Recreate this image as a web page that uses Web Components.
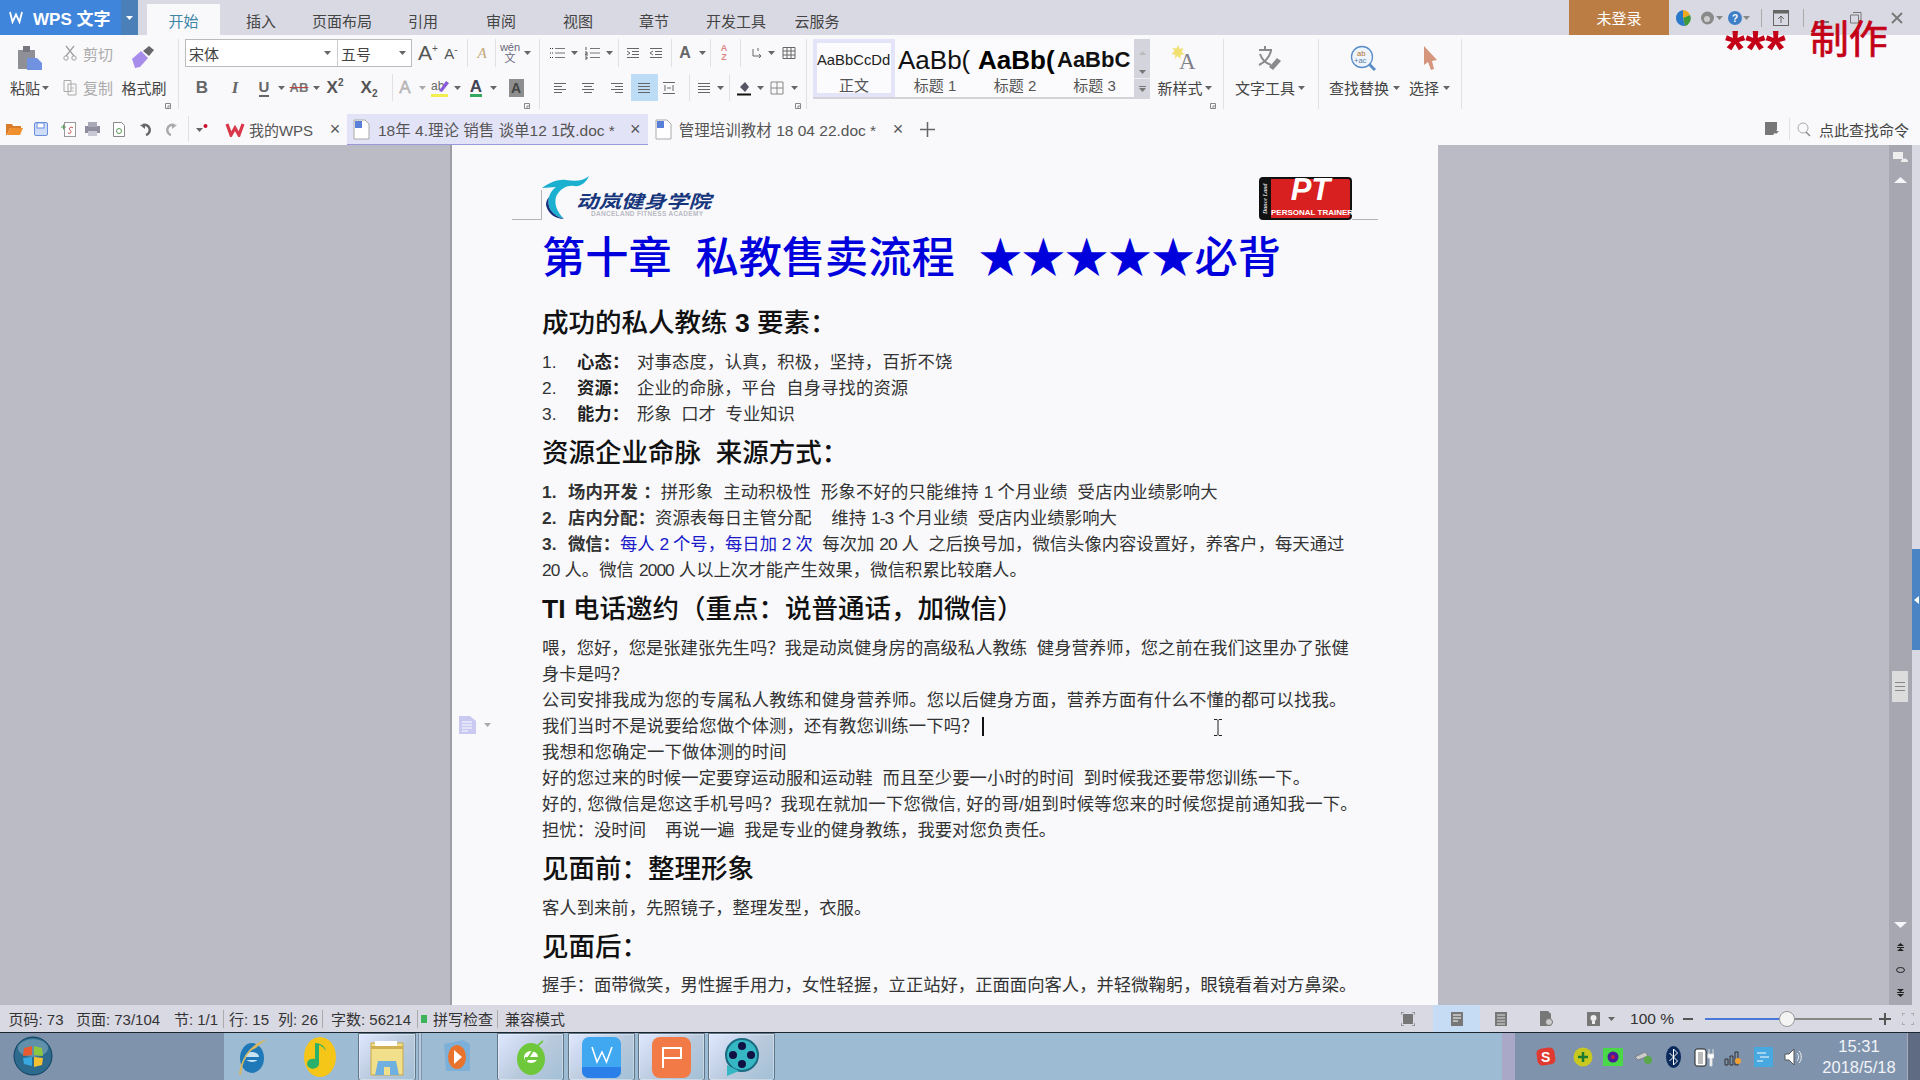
<!DOCTYPE html>
<html lang="zh"><head><meta charset="utf-8"><title>WPS 文字</title>
<style>
html,body{margin:0;padding:0;width:1920px;height:1080px;overflow:hidden;font-family:"Liberation Sans","Noto Sans CJK SC",sans-serif}
</style></head><body>
<wps-app>
<wps-titlebar></wps-titlebar>
<wps-ribbon></wps-ribbon>
<wps-tabs></wps-tabs>
<wps-work></wps-work>
<wps-status></wps-status>
<wps-taskbar></wps-taskbar>
</wps-app>
<script>
const FONT = '"Liberation Sans","Noto Sans CJK SC",sans-serif';

function def(name, html, css) {
  customElements.define(name, class extends HTMLElement {
    constructor() {
      super();
      this.attachShadow({mode: "open"}).innerHTML = `<style>*{box-sizing:border-box}
        .c{display:flex;align-items:center;justify-content:center;flex:none;white-space:nowrap;height:100%}
        .v{display:block;width:1px;height:100%;background:#e0e0e6}
        ${css}</style>${html}`;
    }
  });
}
// lays out cells in a row by centre x, the gaps come out as margins
function cells(x0, items) {
  let x = x0, out = "";
  for (const [cx, w, html, style] of items) {
    const left = cx - w / 2;
    out += `<span class="c" style="width:${w}px;margin-left:${left - x}px;${style || ""}">${html}</span>`;
    x = left + w;
  }
  return out;
}
const caret = (c = "#666") => `<svg width="7" height="4" viewBox="0 0 7 4"><path d="M0 0h7L3.500 4z" fill="${c}"/></svg>`;
const sep = `<i class="v"></i>`;

def("wps-app", `<slot></slot>`, `:host{display:flex;flex-direction:column;width:1920px;height:1080px;font-family:${FONT}}`);

def("wps-titlebar", `
  <div class="bar">
  ${cells(0, [
    [69, 138, `<svg width="14" height="13" viewBox="0 0 14 13" style="margin-right:10px"><path d="M1 1l2.500 10L7 3.500 10.500 11 13 1" fill="none" stroke="#fff" stroke-width="1.800"/></svg><b>WPS 文字</b>`, "background:#3f85dc;color:#fff;font-size:17px;justify-content:flex-start;padding-left:9px"],
  ])}
  <span class="c" style="width:17px;margin-left:-17px;background:#4a7fb8">${caret("#fff")}</span>
  <span class="c tab on" style="width:73px;margin-left:9px">开始</span>
  ${cells(221, [
    [262, 60, "插入"], [343, 70, "页面布局"], [424, 40, "引用"], [502, 40, "审阅"], [579, 40, "视图"],
    [655, 40, "章节"], [737, 70, "开发工具"], [818, 50, "云服务"],
  ].map(i => [i[0], i[1], i[2], "padding-top:5px"]))}
  ${cells(843, [
    [1620, 100, "未登录", "background:#bb7d43;color:#fff"],
    [1684, 18, `<svg width="16" height="18" viewBox="0 0 16 18"><path d="M8 1a8 8 0 0 1 7 5L8 9z" fill="#f2a81e"/><path d="M15 6a8 8 0 0 1-5 11L8 9z" fill="#3f9a3a"/><path d="M10 17A8 8 0 0 1 8 1v8z" fill="#2a78c8"/></svg>`],
    [1708, 14, `<svg width="13" height="14" viewBox="0 0 13 14"><circle cx="6.500" cy="7" r="6.500" fill="#8a8a8a"/><circle cx="6" cy="8" r="3" fill="#ccc"/></svg>`],
    [1720, 8, caret("#888")],
    [1736, 15, `<svg width="14" height="14" viewBox="0 0 14 14"><circle cx="7" cy="7" r="7" fill="#3f7fc8"/><text x="4" y="11" font-family="Liberation Sans" font-weight="700" font-size="10" fill="#fff">?</text></svg>`],
    [1747, 8, caret("#888")],
    [1762, 1, `<i class="v" style="background:#aaa;height:18px"></i>`],
    [1782, 18, `<svg width="16" height="16" viewBox="0 0 16 16"><rect x=".5" y=".5" width="15" height="15" fill="none" stroke="#666"/><rect x=".5" y=".5" width="15" height="3" fill="#666"/><path d="M8 13V6.500M5 9l3-3 3 3" fill="none" stroke="#666"/></svg>`],
    [1804, 1, `<i class="v" style="background:#aaa;height:18px"></i>`],
    [1824, 12, `<svg width="12" height="12" viewBox="0 0 12 12"><path d="M0 10h12" stroke="#777" stroke-width="2"/></svg>`],
    [1857, 12, `<svg width="12" height="12" viewBox="0 0 12 12"><path d="M3 .5h8v8M.5 3h8v8h-8z" fill="none" stroke="#777"/></svg>`],
    [1898, 12, `<svg width="12" height="12" viewBox="0 0 12 12"><path d="M1 1l10 10M11 1L1 11" stroke="#777" stroke-width="1.800"/></svg>`],
  ])}
  </div>
  <div class="stamp"><span class="ast">***</span><span class="zz">制作</span></div>`, `
  :host{display:block;height:35px;background:#d9d9e3;position:relative;flex:none;font-size:15px;color:#444}
  .bar{display:flex;height:35px}
  .tab.on{height:31px;margin-top:4px;padding-top:1px;background:#f9f9fb;color:#3d86a8}
  .stamp{position:absolute;left:1725px;top:20px;display:flex;align-items:flex-start;color:#c40018;z-index:5;height:40px}
  .ast{font:700 52px/52px "Liberation Sans",sans-serif;margin-top:3px;height:40px}
  .zz{font:400 39px/39px ${FONT};margin-left:24px;-webkit-text-stroke:.7px #c40018}
`);

const icon = (w, h, body, st = "") => `<svg width="${w}" height="${h}" viewBox="0 0 ${w} ${h}" style="${st}">${body}</svg>`;
const ln = (d, c = "#666") => icon(14, 14, `<path d="${d}" stroke="${c}" fill="none"/>`);
const L = "M1 2.500h12M1 5.500h8M1 8.500h12M1 11.500h8", C = "M1 2.500h12M3 5.500h8M1 8.500h12M3 11.500h8", R = "M1 2.500h12M5 5.500h8M1 8.500h12M5 11.500h8", J = "M1 2.500h12M1 5.500h12M1 8.500h12M1 11.500h12";
const bullets = icon(15, 14, `<path d="M5 2.500h10M5 7h10M5 11.500h10" stroke="#777"/><path d="M0 2.500h3M0 7h3M0 11.500h3" stroke="#333" stroke-dasharray="1 1"/>`);
const numbers = icon(15, 14, `<path d="M5 2.500h10M5 7h10M5 11.500h10" stroke="#777"/><path d="M1 1v3M0 6h2v2H0v1h3M0 11h2v2H0" stroke="#333" fill="none" stroke-width=".8"/>`);
const launch = (st) => `<svg class="launch" style="${st}" width="6" height="6" viewBox="0 0 6 6"><path d="M.5.500h5v5h-5zM3 3h2.500v2.500H3z" fill="none" stroke="#888"/></svg>`;
const sepc = (x) => [x, 1, sep, ""];

def("wps-ribbon", `
  <section style="width:179px">
    <div class="r1">${cells(0, [
      [30, 25, icon(25, 24, `<rect x="0" y="4" width="17" height="19" fill="#8f8f96"/><rect x="5" y="0" width="7" height="6" fill="#77777f"/><path d="M9 12h10l5 5v7H9z" fill="#7092e0"/>`, "margin-top:10px")],
      [70, 14, icon(14, 16, `<path d="M3 1l8 10M11 1L3 11" stroke="#a0a0a0" stroke-width="1.300" fill="none"/><circle cx="3" cy="13" r="2.200" fill="none" stroke="#a0a0a0"/><circle cx="11" cy="13" r="2.200" fill="none" stroke="#a0a0a0"/>`)],
      [98, 31, "剪切", "color:#aaa"],
      [143, 24, icon(24, 24, `<path d="M1 14l9-8 7 7-8 9-5 1z" fill="#a88cec"/><path d="M12 6l6-5 5 4-5 6z" fill="#66666c"/>`, "margin-top:8px")],
    ])}</div>
    <div class="r2">${cells(0, [
      [25, 31, "粘贴"], [45, 7, caret()],
      [70, 14, icon(14, 16, `<path d="M1 .5h7v11H1zM5 4h8v11H5z" fill="#f8f8f8" stroke="#aaa"/><path d="M7 8h4M7 11h4" stroke="#bbb"/>`)],
      [98, 31, "复制", "color:#aaa"],
      [144, 46, "格式刷"],
    ])}</div>${launch("left:165px")}
  </section>
  <section style="width:361px">
    <div class="r1">${cells(179, [
      [261, 152, `宋体${caret()}`, "background:#fff;border:1px solid #bbb;border-right:0;justify-content:space-between;padding:0 6px 0 3px"],
    ])}
    ${cells(337, [
      [374.500, 75, `五号${caret()}`, "background:#fff;border:1px solid #bbb;border-left-color:#ccc;justify-content:space-between;padding:0 5px 0 3px"],
    ])}
    ${cells(412, [
      [428, 24, `<span style="font-size:21px">A<sup>+</sup></span>`, "color:#555"],
      [451, 20, `<span style="font-size:15px">A<sup>-</sup></span>`, "color:#555"],
      sepc(467),
      [482, 18, `<span style="font:italic 15px 'Liberation Serif',serif;color:#c4a777">A</span>`],
      sepc(495),
      [510, 24, `<span class="wen">wén<br>文</span>`],
      [527, 8, caret()],
    ])}</div>
    <div class="r2">${cells(179, [
      [202, 16, "B", "font-size:17px;font-weight:700;color:#666"],
      [235, 12, "I", "font:italic 700 17px 'Liberation Serif',serif;color:#666"],
      [264, 16, `<span style="border-bottom:2px solid #666;line-height:16px;font-size:15px;font-weight:700;color:#666">U</span>`],
      [281, 8, caret()],
      [299, 20, `<s style="font-size:13px;font-weight:700;color:#777;text-decoration-color:#b44">AB</s>`],
      [316, 8, caret()],
      [335, 22, `<span style="font-size:17px;font-weight:700;color:#555">X<sup>2</sup></span>`],
      [369, 22, `<span style="font-size:17px;font-weight:700;color:#555">X<sub>2</sub></span>`],
      sepc(392),
      [405, 16, `<span style="font-size:17px;color:#c4c4c4;-webkit-text-stroke:.3px #888">A</span>`],
      [422, 8, caret("#aaa")],
      [440, 18, icon(18, 19, `<text x="0" y="12" font-family="Liberation Sans" font-size="12" fill="#666">ab</text><path d="M8 13l7-10 3 2-7 9z" fill="#8a5ad8"/><rect y="16" width="17" height="3" fill="#f2ee50"/>`)],
      [457, 8, caret()],
      [476, 16, `<span style="border-bottom:3px solid #35a860;line-height:15px;font-size:17px;font-weight:700;color:#445">A</span>`],
      [493, 8, caret()],
      [516, 16, `<span style="background:#8e8e8e;color:#444;font-size:14px;font-weight:700;width:15px;height:18px;display:flex;align-items:center;justify-content:center">A</span>`],
    ])}</div>${launch("left:345px")}
  </section>
  <section style="width:267px">
    <div class="r1">${cells(540, [
      [557, 16, bullets], [574, 8, caret()],
      [592, 16, numbers], [609, 8, caret()],
      sepc(618),
      [633, 16, ln("M1 2.500h12M6 5.500h7M6 8.500h7M1 11.500h12M1 5l3 2-3 2")],
      [656, 16, ln("M1 2.500h12M6 5.500h7M6 8.500h7M1 11.500h12M4 5L1 7l3 2")],
      sepc(671),
      [685, 14, `<b style="font-size:16px;color:#666">A</b>`], [702, 8, caret()],
      sepc(710),
      [724, 12, `<span style="font:700 9px/9px 'Liberation Sans',sans-serif;color:#d88;text-align:center">A<br>Z</span>`],
      sepc(740),
      [756, 14, ln("M4 3v7h8M10 8l2 2-2 2M9 2v3")], [771, 8, caret()],
      [789, 16, ln("M1 1.500h12v11H1zM5 1.500v11M9 1.500v11M1 5h12M1 9h12")],
    ])}</div>
    <div class="r2">${cells(540, [
      [560, 14, ln(L)], [588, 14, ln(C)], [617, 14, ln(R)],
      [644, 27, ln(J), "background:#bddcf5"],
      [669, 16, ln("M1 1.500h12M1 12.500h12M3 4v6M11 4v6M5 7h4")],
      sepc(689),
      [704, 14, ln(J)], [720, 8, caret()],
      sepc(729),
      [744, 16, icon(16, 16, `<path d="M4 7l5-5 4 5-4 5z" fill="#556"/><path d="M1 14.500h14" stroke="#111" stroke-width="2"/>`)], [760, 8, caret()],
      [777, 14, ln("M1 1h12v12H1zM7 1v12M1 7h12", "#888")], [794, 8, caret()],
    ])}</div>${launch("left:255px")}
  </section>
  <div class="styles">
    <div class="st sel"><p class="s0">AaBbCcDd</p><u>正文</u></div>
    <div class="st"><p class="s1">AaBb(</p><u>标题 1</u></div>
    <div class="st"><p class="s2">AaBb(</p><u>标题 2</u></div>
    <div class="st" style="width:79px"><p class="s3">AaBbC</p><u>标题 3</u></div>
    <div class="spin">
      <i style="height:27px">${icon(7, 4, `<path d="M0 4h7L3.500 0z" fill="#bbb"/>`)}</i>
      <i style="height:12px">${caret("#777")}</i>
      <i style="height:21px;border-top:1px solid #eee">${icon(7, 6, `<path d="M0 0h7v1H0zM0 2h7L3.500 6z" fill="#777"/>`)}</i>
    </div>
  </div>
  <section style="width:74px">
    <div class="r1">${cells(1150, [
      [1185, 30, icon(30, 26, `<path d="M8 0l1.500 4 4-1-2 4 3 2-4 1v4l-3-3-3 3 1-4-4-1 3-3-2-3 4 .500z" fill="#f0e070"/><text x="9" y="24" font-family="Liberation Serif" font-size="23" fill="#808088">A</text>`, "margin-top:10px")],
    ])}</div>
    <div class="r2">${cells(1150, [[1180, 46, "新样式"], [1208, 8, caret()]])}</div>${launch("left:60px")}
  </section>
  <section style="width:95px">
    <div class="r1">${cells(1225, [
      [1270, 26, icon(26, 26, `<path d="M3 5h13M9 1v4M4 9c2 6 5 9 11 11M15 6c-2 7-6 11-12 14" stroke="#8a8a8a" stroke-width="2" fill="none"/><path d="M13 22l8-9 4 3-8 9z" fill="#8a8a8a"/>`, "margin-top:10px")],
    ])}</div>
    <div class="r2">${cells(1225, [[1266, 60, "文字工具"], [1302, 8, caret()]])}</div>
  </section>
  <section style="width:143px">
    <div class="r1">${cells(1320, [
      [1364, 26, icon(26, 26, `<circle cx="12" cy="12" r="10.500" fill="#eef4fa" stroke="#5a8dc8" stroke-width="1.300"/><text x="7" y="11" font-family="Liberation Sans" font-size="7.500" fill="#b07030">ab</text><text x="4" y="18" font-family="Liberation Sans" font-size="7.500" fill="#5a7ea8">+ac</text><path d="M19 19l6 6" stroke="#5a8dc8" stroke-width="3"/>`, "margin-top:10px")],
      [1432, 16, icon(16, 26, `<path d="M1 1l13 14-5 1 2 8-3 1-3-8-4 3z" fill="#d6967e"/>`, "margin-top:10px")],
    ])}</div>
    <div class="r2">${cells(1320, [[1360, 60, "查找替换"], [1397, 8, caret()], [1425, 30, "选择"], [1447, 8, caret()]])}</div>
  </section>`, `
  :host{display:flex;height:78px;background:#f9f9fb;flex:none;color:#444;font-size:15px;align-items:flex-start}
  section{position:relative;height:70px;margin-top:4px;border-right:1px solid #e0e0e6;flex:none;padding-top:0}
  .r1,.r2{display:flex;height:28px}
  .r2{height:27px;margin-top:7px}
  .launch{position:absolute;top:64px}
  sup,sub{font-size:10px;line-height:0}
  .wen{font-size:11px;line-height:11px;text-align:center;color:#667}
  .styles{position:relative;flex:none;display:flex;width:337px;height:60px;margin:4px 0 0 6px;background:#fbfbfd;border-bottom:2px solid #d4d4d8}
  .st{width:80px;height:58px;text-align:center;flex:none;white-space:nowrap}
  .st p{margin:4px 0 0;height:34px;line-height:34px;text-align:left}
  .s0{font:14.800px/34px ${FONT};color:#222}
  .s1{font:26px/34px ${FONT};color:#111;padding-left:3px}
  .s2{font:700 26px/34px ${FONT};color:#000;padding-left:3px}
  .s3{font:700 22px/34px ${FONT};color:#111;padding-left:2px}
  .st u{display:block;text-decoration:none;font-size:15px;color:#555;line-height:18px;margin-top:0}
  .sel{border:4px solid #e4e4f8;width:82px}
  .sel p{margin-top:0}
  .spin{width:16px;background:#d4d4dc;display:flex;flex-direction:column;height:60px;margin-bottom:-2px}
  .spin i{display:flex;align-items:center;justify-content:center}
`);

def("wps-tabs", `
  ${cells(0, [
    [14, 17, icon(17, 14, `<path d="M0 2h6l1 2h8v2H4L1 13H0z" fill="#d97c28"/><path d="M4 6h13l-3 7H1z" fill="#f09030"/>`)],
    [41, 14, icon(14, 14, `<rect x=".5" y=".5" width="13" height="13" rx="1.500" fill="#cfdcf8" stroke="#6a8fe0"/><rect x="3" y="1" width="7" height="5" fill="#fff" stroke="#6a8fe0"/>`)],
    [68, 15, icon(15, 15, `<rect x="3.500" y=".5" width="11" height="14" fill="#fff" stroke="#999"/><path d="M0 5h5M2.500 2.500v5" stroke="#5a9a5a"/><path d="M7 11c3 1 4-1 2-3s1-4 3-2" fill="none" stroke="#c05050"/>`)],
    [92, 15, icon(15, 14, `<rect y="4" width="15" height="7" fill="#8e8ea0"/><rect x="3" y="0" width="9" height="5" fill="#a8a8b8"/><rect x="3" y="9" width="9" height="5" fill="#c8c8d4"/>`)],
    [119, 12, icon(12, 15, `<path d="M.5.500h8l3 3v11H.5z" fill="#fff" stroke="#888"/><circle cx="6" cy="9" r="2.500" fill="none" stroke="#5a9a5a"/>`)],
    [145, 13, icon(13, 13, `<path d="M4 2a5 5 0 1 1 3 10" fill="none" stroke="#666" stroke-width="2.500"/><path d="M1 2l5-1v5z" fill="#666"/>`)],
    [171, 13, icon(13, 13, `<path d="M9 2a5 5 0 1 0-3 10" fill="none" stroke="#aaa" stroke-width="2.500"/><path d="M12 2L7 1v5z" fill="#aaa"/>`)],
    [188, 1, `<i class="v" style="height:26px"></i>`],
    [202, 12, icon(12, 10, `<path d="M0 4h7L3.500 8z" fill="#666"/><circle cx="9.500" cy="2" r="2" fill="#c8102e"/>`)],
    [235, 20, icon(20, 15, `<path d="M2 2l4 11 4-7 4 7 4-11" fill="none" stroke="#d8384a" stroke-width="3.200"/>`)],
    [281, 63, "我的WPS"],
    [335, 10, "×", "font-size:18px;color:#555"],
  ])}
  <div class="act">
    ${icon(17, 21, `<path d="M1 1h11l4 4v15H1z" fill="#fff" stroke="#aaa"/><rect x="2" y="2" width="7" height="7" fill="#5a7fd8"/>`)}
    <span style="margin-left:8px;width:252px">18年 4.理论 销售 谈单12 1改.doc *</span>
    <span style="font-size:18px">×</span>
  </div>
  ${cells(648, [
    [663, 17, icon(17, 21, `<path d="M1 1h11l4 4v15H1z" fill="#fff" stroke="#aaa"/><rect x="2" y="2" width="7" height="7" fill="#5a7fd8"/>`)],
    [777.500, 201, "管理培训教材 18 04 22.doc *", "font-size:15.500px"],
    [898, 10, "×", "font-size:18px;color:#555"],
    [927, 16, icon(15, 15, `<path d="M7.500 0v15M0 7.500h15" stroke="#666" stroke-width="1.500"/>`)],
    [1772, 14, icon(14, 14, `<path d="M0 0h12v8l-4 5H0z" fill="#777"/><path d="M8 9h6l-3 3z" fill="#777"/>`)],
    [1789, 1, `<i class="v" style="height:22px"></i>`],
    [1804, 14, icon(14, 15, `<circle cx="6" cy="6" r="5" fill="none" stroke="#aaa"/><path d="M9 10l4 4" stroke="#888" stroke-width="1.500"/>`)],
    [1864, 92, "点此查找命令", "color:#444"],
  ])}`, `
  :host{display:flex;height:32px;background:#f9f9fb;flex:none;font-size:15px;color:#555}
  .act{display:flex;align-items:center;flex:none;width:301px;margin-left:7px;padding-left:6px;height:31px;margin-top:1px;background:#e3e3f7;border-bottom:1px solid #9a9ad8;white-space:nowrap;font-size:15.500px}
`);

def("wps-doc", `<slot></slot>`, `
  :host{display:block;width:988px;height:860px;background:#f9f9fb;border-left:2px solid #9e9ea6;overflow:hidden;padding-left:90px;flex:none;position:relative;color:#222;font-family:${FONT}}
`);

def("doc-header", `
  <i class="stub" style="width:30px;height:30px;border-right:1px solid #b4b4b8"></i>
  <div class="logo">
    ${icon(52, 44, `<path d="M0 12 C6 8 14 3 24 4 C32 5 40 6 47 0 C44 7 38 11 32 10 C24 9 17 14 14 21 C12 28 15 36 22 43 C10 40 4 30 7 21 C8 17 10 14 14 11 C10 11 5 12 0 12z" fill="#1bb0d0"/><path d="M7 21 C4 30 10 40 22 43 C14 43 6 38 4 29 C4 26 5 23 7 21z" fill="#16307e"/>`)}
    <div class="lt"><b>动岚健身学院</b><small>DANCELAND FITNESS ACADEMY</small></div>
  </div>
  <div class="pt"><i>Dance Land</i><div><b>PT</b><small>PERSONAL TRAINER</small></div></div>
  <i class="stub" style="width:26px"></i>`, `
  :host{display:flex;align-items:flex-end;height:75px;margin-left:-30px;width:866px}
  .stub{display:block;height:1px;border-bottom:1px solid #b4b4b8;flex:none}
  .logo{display:flex;align-items:flex-end;height:44px;flex:1}
  .logo svg{flex:none;margin-right:-18px}
  .lt{display:flex;flex-direction:column;align-items:flex-start}
  .lt b{font:italic 700 22.500px/18px ${FONT};color:#17367c;white-space:nowrap;height:19px;transform:scaleY(.8);transform-origin:bottom}
  .lt small{font:700 6.500px/8px "Liberation Sans",sans-serif;color:#b9bac4;margin:0 0 2px 15px;white-space:nowrap;letter-spacing:.3px}
  .pt{width:93px;height:43px;background:#d82020;border-radius:4px;border:2px solid #111;border-left:12px solid #111;position:relative;display:flex;color:#fff;flex:none}
  .pt i{position:absolute;left:-11px;top:0;bottom:0;width:10px;writing-mode:vertical-rl;transform:rotate(180deg);font:italic 700 6px/10px "Liberation Serif",serif;text-align:center;color:#ddd;white-space:nowrap}
  .pt div{display:flex;flex-direction:column;align-items:center;width:100%;position:relative}
  .pt b{display:block;font:italic 900 31px/35px "Liberation Sans",sans-serif;color:#fff;margin-top:-7px}
  .pt small{position:absolute;left:0;right:0;bottom:0;text-align:center;font:700 8px/10px "Liberation Sans",sans-serif;white-space:nowrap}
`);

def("doc-title", `<slot></slot>`, `:host{display:block;font:500 43.200px/52px ${FONT};color:#0000dc;white-space:pre;margin-top:12px;height:53px}`);
def("doc-h", `<slot></slot>`, `:host{display:block;font:500 26.500px/32px ${FONT};color:#111;white-space:pre;height:32px}`);
def("doc-p", `<slot></slot>`, `:host{display:block;font:400 17.330px/26px ${FONT};color:#333;white-space:pre;height:26px}`);
def("doc-li", `<slot name="n"></slot><slot name="k"></slot><slot></slot>`, `
  :host{display:block;font:400 17.330px/26px ${FONT};color:#333;white-space:pre;height:26px}
  ::slotted([slot=n]){display:inline-block;width:35px}
  ::slotted([slot=k]){display:inline-block;width:60px;font-weight:700;color:#222}
`);

def("wps-work", `
  <div class="gutter"></div>
  <wps-doc>
    <div class="mark">${icon(17, 18, `<path d="M0 0h11l6 5v13H0z" fill="#c9c9f2"/><path d="M3 6h10M3 9h10M3 12h10M3 15h6" stroke="#fff"/>`)}${caret("#aaa")}</div>
    <doc-header></doc-header>
    <doc-title>第十章  私教售卖流程  ★★★★★必背</doc-title>
    <doc-h style="margin-top:22px">成功的私人教练 <b>3</b> 要素：</doc-h>
    <div style="height:10px"></div>
    <doc-li style="letter-spacing:.2px"><span slot="n">1.</span><span slot="k">心态：</span>对事态度，认真，积极，坚持，百折不饶</doc-li>
    <doc-li style="letter-spacing:.1px"><span slot="n">2.</span><span slot="k">资源：</span>企业的命脉，平台  自身寻找的资源</doc-li>
    <doc-li><span slot="n">3.</span><span slot="k">能力：</span>形象  口才  专业知识</doc-li>
    <doc-h style="margin-top:10px">资源企业命脉  来源方式：</doc-h>
    <div style="height:10px"></div>
    <doc-p style="letter-spacing:.2px"><b class="n">1.</b><b>场内开发 ：</b>拼形象  主动积极性  形象不好的只能维持 <i class="d">1</i> 个月业绩  受店内业绩影响大</doc-p>
    <doc-p style="letter-spacing:.08px"><b class="n">2.</b><b>店内分配：</b>资源表每日主管分配    维持 <i class="d">1-3</i> 个月业绩  受店内业绩影响大</doc-p>
    <doc-p><b class="n">3.</b><b>微信：</b><span style="color:#1a1ac8">每人 <i class="d">2</i> 个号，每日加 <i class="d">2</i> 次</span>  每次加 <i class="d">20</i> 人  之后换号加，微信头像内容设置好，养客户，每天通过</doc-p>
    <doc-p style="letter-spacing:.08px"><i class="d">20</i> 人。微信 <i class="d">2000</i> 人以上次才能产生效果，微信积累比较磨人。</doc-p>
    <doc-h style="margin-top:10px"><b style="font-weight:700">TI</b> 电话邀约（重点：说普通话，加微信）</doc-h>
    <div style="height:10px"></div>
    <doc-p>喂，您好，您是张建张先生吗？我是动岚健身房的高级私人教练  健身营养师，您之前在我们这里办了张健</doc-p>
    <doc-p>身卡是吗？</doc-p>
    <doc-p style="letter-spacing:.16px">公司安排我成为您的专属私人教练和健身营养师。您以后健身方面，营养方面有什么不懂的都可以找我。</doc-p>
    <doc-p style="letter-spacing:.14px">我们当时不是说要给您做个体测，还有教您训练一下吗？<i class="cur"></i></doc-p>
    <doc-p style="letter-spacing:.16px">我想和您确定一下做体测的时间</doc-p>
    <doc-p style="letter-spacing:.08px">好的您过来的时候一定要穿运动服和运动鞋  而且至少要一小时的时间  到时候我还要带您训练一下。</doc-p>
    <doc-p style="letter-spacing:.24px">好的, 您微信是您这手机号吗？我现在就加一下您微信, 好的哥/姐到时候等您来的时候您提前通知我一下。</doc-p>
    <doc-p>担忧：没时间    再说一遍  我是专业的健身教练，我要对您负责任。</doc-p>
    <doc-h style="margin-top:10px">见面前：整理形象</doc-h>
    <div style="height:10px"></div>
    <doc-p>客人到来前，先照镜子，整理发型，衣服。</doc-p>
    <doc-h style="margin-top:10px">见面后：</doc-h>
    <div style="height:9px"></div>
    <doc-p>握手：面带微笑，男性握手用力，女性轻握，立正站好，正面面向客人，并轻微鞠躬，眼镜看着对方鼻梁。</doc-p>
    ${icon(8, 17, `<path d="M0 .5h3l1 1 1-1h3M4 1.500v14M0 16.500h3l1-1 1 1h3" fill="none" stroke="#222"/>`, "position:absolute;left:762px;top:574px")}
  </wps-doc>
  <div class="rest"></div>
  <div class="sb">
    <div class="a" style="top:7px;left:4px">${icon(15, 10, `<path d="M0 0h10v7H0z" fill="#eee"/><path d="M8 10a3.500 3.500 0 0 1 7 0z" fill="#eee"/>`)}</div>
    <div class="a" style="top:32px;left:5px">${icon(13, 6, `<path d="M0 6h13L6.500 0z" fill="#f6f6fa"/>`)}</div>
    <div class="thumb"><i></i><i></i><i></i></div>
    <div class="a" style="top:777px;left:5px">${icon(13, 6, `<path d="M0 0h13L6.500 6z" fill="#f6f6fa"/>`)}</div>
    <div class="a" style="top:798px;left:8px">${icon(7, 8, `<path d="M0 3l3.500-3L7 3zM0 4h7v1H0zM0 8l3.500-3L7 8z" fill="#222"/>`)}</div>
    <div class="a" style="top:822px;left:7px">${icon(9, 6, `<ellipse cx="4.500" cy="3" rx="4" ry="2.500" fill="none" stroke="#222"/>`)}</div>
    <div class="a" style="top:844px;left:8px">${icon(7, 8, `<path d="M0 0l3.500 3L7 0zM0 3h7v1H0zM0 5l3.500 3L7 5z" fill="#222"/>`)}</div>
  </div>
  <div class="side"><div class="tabb">${icon(5, 8, `<path d="M5 0v8L0 4z" fill="#fff"/>`)}</div></div>`, `
  :host{display:flex;flex:none;height:860px;background:#bbbbc5;position:relative;overflow:hidden}
  .gutter{width:450px;flex:none}
  .mark{position:absolute;left:7px;top:571px;display:flex;align-items:center;gap:8px}
  .n{display:inline-block;width:26px}
  .d{font-style:normal;letter-spacing:-.9px}
  .cur{display:inline-block;width:2px;height:19px;background:#111;vertical-align:-4px;margin-left:3px}
  .rest{width:451px;flex:none}
  .sb{width:23px;background:#a7a7b1;flex:none;position:relative}
  .a{position:absolute;display:flex}
  .thumb{position:absolute;left:3px;top:526px;width:16px;height:31px;background:#dcdcdc;display:flex;flex-direction:column;gap:3px;justify-content:center;align-items:center}
  .thumb i{display:block;width:10px;height:1px;background:#888}
  .side{width:8px;flex:none;background:#d9d9e3;position:relative}
  .tabb{position:absolute;left:0;top:404px;width:8px;height:101px;background:#4a84c4;display:flex;align-items:center;justify-content:center}
`);

def("wps-status", `
  ${cells(0, [
    [36, 60, "页码: 73"], [118, 90, "页面: 73/104"], [196, 48, "节: 1/1"], [223, 1, `<i class="v" style="background:#aaa;height:18px"></i>`],
    [249, 42, "行: 15"], [298, 42, "列: 26"], [322, 1, `<i class="v" style="background:#aaa;height:18px"></i>`],
    [371, 82, "字数: 56214"], [417, 1, `<i class="v" style="background:#aaa;height:18px"></i>`],
    [424, 6, `<i style="display:block;width:6px;height:8px;background:#3cb55a"></i>`],
    [463, 60, "拼写检查"], [497, 1, `<i class="v" style="background:#aaa;height:18px"></i>`],
    [535, 60, "兼容模式"],
    [1408, 14, icon(14, 14, `<path d="M0 3V0h3M11 0h3v3M14 11v3h-3M3 14H0v-3" fill="none" stroke="#666"/><rect x="2" y="2" width="10" height="10" fill="#777"/>`)],
    [1456.500, 47, icon(12, 14, `<rect width="12" height="14" fill="#777"/><path d="M2 3h8M2 6h8M2 9h5" stroke="#fff"/>`), "background:#c6dcf4"],
    [1501, 12, icon(12, 14, `<rect width="12" height="14" fill="#777"/><path d="M2 3h8M2 6h8M2 9h8M2 12h8" stroke="#ddd"/>`)],
    [1547, 14, icon(14, 15, `<path d="M0 0h8l3 3v12H0z" fill="#777"/><circle cx="9" cy="11" r="3.500" fill="#ccc" stroke="#777"/>`)],
    [1593, 13, icon(13, 14, `<rect width="13" height="14" fill="#777"/><circle cx="6.500" cy="6" r="3" fill="#eee"/><rect x="5" y="9" width="3" height="3" fill="#eee"/>`)],
    [1611, 7, caret()],
    [1652, 46, "100 %", "font-size:15.500px"],
    [1688, 10, icon(10, 2, `<rect width="10" height="2" fill="#555"/>`)],
    [1788.500, 167, `<span class="track"><span class="done"></span><span class="knob"></span></span>`],
    [1885, 12, icon(12, 12, `<path d="M6 0v12M0 6h12" stroke="#555" stroke-width="2"/>`)],
    [1908, 12, icon(12, 12, `<path d="M0 3V0h3M9 0h3v3M12 9v3H9M3 12H0V9" fill="none" stroke="#888"/>`)],
  ])}`, `
  :host{display:flex;height:27px;background:#d9d9e3;flex:none;font-size:15px;color:#333;align-items:stretch}
  .track{display:block;position:relative;width:167px;height:2px;background:#888}
  .done{display:block;width:82px;height:2px;background:#4a78d8}
  .knob{position:absolute;left:74px;top:-7px;width:16px;height:16px;border-radius:50%;background:#f4f4f4;border:1px solid #999}
`);

const tile = (inner) => `<div class="tile">${inner}</div>`;
def("wps-taskbar", `
  <div class="start">${icon(40, 40, `<ellipse cx="20" cy="20" rx="19" ry="19" fill="#2c6b8e" stroke="#0d3d5c"/><ellipse cx="20" cy="12" rx="15" ry="9" fill="#fff" opacity=".25"/><path d="M11 12l8-2v9l-9 1z" fill="#e85a30"/><path d="M21 10l8 2 1 8-9-1z" fill="#8cc63e"/><path d="M10 22l9-1v9l-8-2z" fill="#39a8e0"/><path d="M21 21l9 1-1 7-8 2z" fill="#f5c030"/>`)}</div>
  <div class="tasks">${cells(224, [
    [252, 42, icon(38, 40, `<ellipse cx="19" cy="21" rx="12" ry="15" fill="#1f78b8"/><ellipse cx="19" cy="20" rx="7" ry="5" fill="#c8e4f4"/><rect x="13" y="20" width="16" height="3" fill="#1f78b8"/><path d="M6 38C8 18 20 6 34 2c-4 3-8 6-11 9C14 14 9 26 8 38z" fill="#d8b860"/>`)],
    [320, 42, icon(34, 40, `<ellipse cx="17" cy="20" rx="16" ry="20" fill="#f5c518"/><path d="M16 8v19a6 5 0 1 1-4-5V6c5 0 10 3 11 8-2-3-4-5-7-6z" fill="#29b06a"/>`)],
    [387, 58, tile(icon(36, 40, `<path d="M2 6h32v32H2z" fill="#f2df8c" stroke="#c8a848"/><path d="M6 4h22v6H6z" fill="#fff"/><rect x="2" y="9" width="32" height="3" fill="#d0b050"/><path d="M9 24h18l3 14H6z" fill="#6fb0e0"/><path d="M15 30h6v8h-6z" fill="#f2df8c"/>`))],
    [420, 4, `<i style="display:block;width:4px;height:100%;background:#b6cbdd;border-left:1px solid #7f93ad;border-right:1px solid #7f93ad"></i>`],
    [457, 44, icon(30, 36, `<path d="M2 5l19-4 7 4v27H4z" fill="#7db0d8"/><ellipse cx="15" cy="18" rx="9" ry="12" fill="#e8732c"/><path d="M12 11l8 7-8 7z" fill="#fff"/>`)],
    [530.500, 67, tile(icon(30, 38, `<ellipse cx="15" cy="21" rx="14" ry="16" fill="#6fc83c"/><ellipse cx="15" cy="19" rx="7" ry="6" fill="#fff"/><rect x="9" y="19" width="14" height="3" fill="#6fc83c"/><path d="M6 32C12 18 20 8 27 3" fill="none" stroke="#6fc83c" stroke-width="2"/>`))],
    [601, 67, tile(icon(39, 41, `<rect width="39" height="41" rx="7" fill="#3fa8f0"/><path d="M0 30h39v4a7 7 0 0 1-7 7H7a7 7 0 0 1-7-7z" fill="#2a7fe8"/><path d="M10 10l5 15 5-10 4.500 10L30 10" fill="none" stroke="#fff" stroke-width="1.600"/>`))],
    [671, 67, tile(icon(39, 41, `<rect width="39" height="41" rx="8" fill="#f27a46"/><path d="M11 31V11h18v10H12" fill="none" stroke="#fff" stroke-width="2"/>`))],
    [741, 67, tile(icon(40, 40, `<circle cx="21" cy="18" r="16" fill="#35b8c4" stroke="#1a6b80" stroke-width="2"/><circle cx="21" cy="9" r="4" fill="#114"/><circle cx="21" cy="27" r="4" fill="#114"/><circle cx="12" cy="18" r="4" fill="#114"/><circle cx="30" cy="18" r="4" fill="#114"/><path d="M6 28l12 6-12 5z" fill="#35b8c4"/>`))],
  ])}</div>
  <div class="band"></div>
  <div class="tray">${cells(1515, [
    [1546, 20, icon(20, 20, `<rect x="1" y="1" width="18" height="17" rx="5" fill="#e03a30" transform="rotate(-8 10 10)"/><text x="5" y="15" font-family="Liberation Sans" font-weight="700" font-size="14" fill="#fff">S</text>`)],
    [1583, 20, icon(20, 20, `<circle cx="10" cy="10" r="9.500" fill="#c8c820"/><path d="M10 5v10M5 10h10" stroke="#1a7a30" stroke-width="2.500"/>`)],
    [1613, 20, icon(20, 18, `<rect width="20" height="18" fill="#48d848"/><circle cx="10" cy="9" r="5.500" fill="#4a1a9a"/><circle cx="10" cy="9" r="2" fill="#c02040"/>`)],
    [1644, 20, icon(20, 16, `<path d="M1 8l10-5 3 4-10 4z" fill="#ccc" stroke="#555" stroke-width=".5"/><circle cx="14" cy="11" r="4" fill="#5aa84a"/>`)],
    [1673, 16, icon(15, 22, `<ellipse cx="7.500" cy="11" rx="7.500" ry="11" fill="#0a2a5c"/><path d="M3.500 7l8 8-4 4V3l4 4-8 8" fill="none" stroke="#fff"/>`)],
    [1704, 20, icon(20, 20, `<rect x="1" y="2" width="11" height="17" rx="2" fill="#fff" stroke="#222"/><rect x="4" y="5" width="5" height="12" fill="#bbb"/><path d="M14 7h6v4h-2v8h-2v-8h-2zM15 2v5M19 2v5" fill="#fff" stroke="#ddd"/>`)],
    [1733, 18, icon(18, 18, `<path d="M1 17V11h3v6zM6 17V8h3v9zM11 17V4h3v13z" fill="none" stroke="#333"/><circle cx="14" cy="13" r="3" fill="#f0a030"/>`)],
    [1763, 19, icon(19, 20, `<rect width="19" height="20" fill="#48a8e0"/><path d="M3 6h9M6 10h9M3 14h6" stroke="#fff"/>`)],
    [1793, 18, icon(18, 20, `<path d="M1 7h4l5-5v16l-5-5H1z" fill="#fff" stroke="#555"/><path d="M13 6c2 2 2 6 0 8M15 4c3 3 3 9 0 12" fill="none" stroke="#eee"/>`)],
    [1859, 80, `<span class="clock"><span>15:31</span><span>2018/5/18</span></span>`],
    [1913.500, 13, `<i style="display:block;width:13px;height:100%;background:#5f6b82;border-left:1px solid #aab"></i>`],
  ])}</div>`, `
  :host{display:flex;height:48px;flex:none;background:#9dbbd2;border-top:1px solid #1c2630;overflow:hidden}
  .start{width:224px;flex:none;background:#7f93ad;padding:3px 0 0 13px}
  .tasks{display:flex;flex:none;width:1278px}
  .tile{width:100%;height:100%;display:flex;align-items:center;justify-content:center;border:1px solid #5f7688;border-radius:0 0 3px 3px;background:linear-gradient(135deg,#dfe7ff,#b9c9dc 55%,#a2c0d6);box-shadow:inset 0 0 0 1px rgba(255,255,255,.35)}
  .band{width:13px;flex:none;background:#a9a8c6}
  .tray{display:flex;flex:none;width:405px;background:#7f93ad}
  .clock{display:flex;flex-direction:column;align-items:center;color:#f2f4f8;font:16.500px/21px "Liberation Sans",sans-serif}
`);
</script>
</body></html>
